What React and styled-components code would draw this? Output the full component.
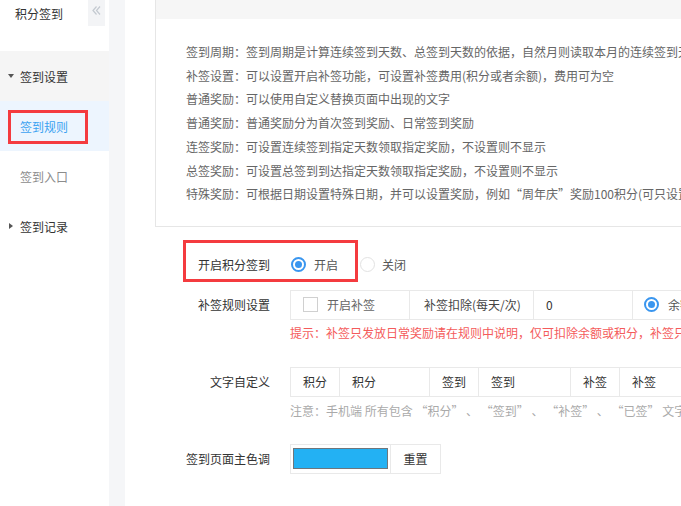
import { Fragment } from "react";
import styled, { createGlobalStyle } from "styled-components";

const GlobalStyle = createGlobalStyle`
  html, body {
    margin: 0;
    padding: 0;
    background: #fff;
  }
  body {
    font-family: "Noto Sans CJK SC", "Noto Sans", sans-serif;
    font-size: 12px;
    color: #333;
  }
`;

const Page = styled.div`
  display: flex;
  width: 681px;
  height: 506px;
  overflow: hidden;
`;

const Sidebar = styled.aside`
  width: 109px;
  flex-shrink: 0;
  background: #fff;
`;

const SideHead = styled.div`
  display: flex;
  justify-content: space-between;
  align-items: center;
  height: 26px;
  margin-bottom: 25px;
  padding-left: 15px;
`;

const SideTitle = styled.span`
  color: #333;
`;

const Collapse = styled.div`
  width: 17px;
  height: 26px;
  margin-right: 4px;
  background: #f3f4f6;
  display: flex;
  justify-content: center;
  padding-top: 6px;
  box-sizing: border-box;
`;

const NavGroup = styled.div`
  display: flex;
  align-items: center;
  gap: 5px;
  height: 50px;
  padding-left: 7px;
  background: ${(p) => (p.$shade ? "#f5f5f5" : "transparent")};
  color: #333;
`;

const Caret = styled.span`
  width: 8px;
  display: flex;
  justify-content: center;
  &::before {
    content: "";
    border-style: solid;
    border-color: transparent;
    ${(p) =>
      p.$open
        ? "border-width: 4px 3px 0 3px; border-top-color: #555;"
        : "border-width: 3.5px 0 3.5px 4px; border-left-color: #555;"}
  }
`;

const NavItem = styled.div`
  position: relative;
  display: flex;
  align-items: center;
  height: 50px;
  padding-left: 20px;
  background: ${(p) => (p.$active ? "#edf5fe" : "transparent")};
  color: ${(p) => (p.$active ? "#3ba2f1" : "#8c8c8c")};
`;

// red annotation frames drawn over the screenshot
const Mark = styled.div`
  position: absolute;
  left: ${(p) => p.$left}px;
  top: ${(p) => p.$top}px;
  width: ${(p) => p.$w}px;
  height: ${(p) => p.$h}px;
  border: 3px solid #f43b3f;
  box-sizing: border-box;
  pointer-events: none;
`;

const Gutter = styled.div`
  width: 16px;
  flex-shrink: 0;
  background: #f5f6f8;
`;

const Main = styled.main`
  flex: 1;
  padding-left: 30px;
  min-width: 0;
`;

const RuleBox = styled.section`
  width: 720px;
  border-left: 1px solid #e6e6e6;
  border-bottom: 1px solid #e6e6e6;
`;

const RuleHead = styled.div`
  height: 19px;
  background: #f6f6f6;
`;

const RuleList = styled.div`
  padding: 21px 0 20px 30px;
  line-height: 23.7px;
  color: #666;
  white-space: nowrap;
`;

const Form = styled.div`
  padding-top: 23px;
`;

const Row = styled.div`
  position: relative;
  display: flex;
  gap: 20px;
  margin-top: ${(p) => p.$gap || 0}px;
`;

const Label = styled.div`
  width: 115px;
  flex-shrink: 0;
  text-align: right;
  line-height: 30px;
  color: #333;
  white-space: nowrap;
`;

const Field = styled.div`
  display: flex;
  flex-direction: column;
  min-width: 0;
`;

const RadioGroup = styled.div`
  display: flex;
  align-items: center;
  height: 30px;
  padding-left: 1px;
  white-space: nowrap;
`;

const RadioOption = styled.label`
  display: flex;
  align-items: center;
  gap: ${(p) => p.$gap || 8}px;
  margin-right: ${(p) => p.$mr || 0}px;
  color: #555;
`;

const Radio = styled.span`
  width: 15px;
  height: 15px;
  border-radius: 50%;
  box-sizing: border-box;
  border: ${(p) => (p.$on ? "2px solid #3a96ef" : "1px solid #e2e2e2")};
  display: flex;
  align-items: center;
  justify-content: center;
  background: #fff;
  &::after {
    content: "";
    width: 7px;
    height: 7px;
    border-radius: 50%;
    background: ${(p) => (p.$on ? "#3a96ef" : "transparent")};
  }
`;

const Table = styled.div`
  display: flex;
  height: 30px;
  box-sizing: border-box;
  border: 1px solid #e9e9e9;
  border-right: none;
  width: max-content;
`;

const Cell = styled.div`
  width: ${(p) => p.$w}px;
  flex-shrink: 0;
  box-sizing: border-box;
  border-right: 1px solid #e9e9e9;
  display: flex;
  align-items: center;
  justify-content: ${(p) => (p.$center ? "center" : "flex-start")};
  gap: ${(p) => p.$gap || 0}px;
  padding-left: ${(p) => (p.$center ? 0 : p.$pl || 0)}px;
  color: ${(p) => p.$color || "#333"};
  white-space: nowrap;
`;

const Checkbox = styled.span`
  width: 15px;
  height: 15px;
  box-sizing: border-box;
  border: 1px solid #d0d0d0;
  background: #fff;
`;

const Swatch = styled.span`
  width: 95px;
  height: 21px;
  box-sizing: border-box;
  border: 1px solid #6e767c;
  background: #23b1f3;
`;

const Hint = styled.div`
  line-height: 20px;
  margin-top: ${(p) => p.$gap || 3}px;
  color: ${(p) => (p.$warn ? "#f45b5b" : "#aaa")};
  white-space: nowrap;
`;

const rules = [
  "签到周期：签到周期是计算连续签到天数、总签到天数的依据，自然月则读取本月的连续签到天数",
  "补签设置：可以设置开启补签功能，可设置补签费用(积分或者余额)，费用可为空",
  "普通奖励：可以使用自定义替换页面中出现的文字",
  "普通奖励：普通奖励分为首次签到奖励、日常签到奖励",
  "连签奖励：可设置连续签到指定天数领取指定奖励，不设置则不显示",
  "总签奖励：可设置总签到到达指定天数领取指定奖励，不设置则不显示",
  "特殊奖励：可根据日期设置特殊日期，并可以设置奖励，例如“周年庆”奖励100积分(可只设置奖励)",
];

const words = ["积分", "签到", "补签"];
const wordWidths = [90, 92, 120];

const ChevronsLeft = () => (
  <svg width="9" height="9" viewBox="0 0 9 9" fill="none" stroke="#c3c9d0" strokeWidth="1.2">
    <polyline points="4.5,0.5 1,4.5 4.5,8.5" />
    <polyline points="8,0.5 4.5,4.5 8,8.5" />
  </svg>
);

export default function App() {
  return (
    <>
      <GlobalStyle />
      <Page>
        <Sidebar>
          <SideHead>
            <SideTitle>积分签到</SideTitle>
            <Collapse>
              <ChevronsLeft />
            </Collapse>
          </SideHead>
          <NavGroup $shade>
            <Caret $open />
            签到设置
          </NavGroup>
          <NavItem $active>
            签到规则
            <Mark $left={8} $top={9} $w={80} $h={34} />
          </NavItem>
          <NavItem>签到入口</NavItem>
          <NavGroup>
            <Caret />
            签到记录
          </NavGroup>
        </Sidebar>
        <Gutter />
        <Main>
          <RuleBox>
            <RuleHead />
            <RuleList>
              {rules.map((r, i) => (
                <div key={i}>{r}</div>
              ))}
            </RuleList>
          </RuleBox>
          <Form>
            <Row>
              <Label>开启积分签到</Label>
              <RadioGroup>
                <RadioOption $mr={22}>
                  <Radio $on />
                  开启
                </RadioOption>
                <RadioOption $gap={7}>
                  <Radio />
                  关闭
                </RadioOption>
              </RadioGroup>
              <Mark $left={28} $top={-10} $w={175} $h={42} />
            </Row>
            <Row $gap={10}>
              <Label>补签规则设置</Label>
              <Field>
                <Table>
                  <Cell $w={119} $pl={12} $gap={9} $color="#666">
                    <Checkbox />
                    开启补签
                  </Cell>
                  <Cell $w={124} $pl={14} $color="#444">
                    补签扣除(每天/次)
                  </Cell>
                  <Cell $w={99} $pl={12}>
                    0
                  </Cell>
                  <Cell $w={200} $pl={11} $gap={9} $color="#555">
                    <Radio $on />
                    余额
                  </Cell>
                </Table>
                <Hint $warn>
                  提示：补签只发放日常奖励请在规则中说明，仅可扣除余额或积分，补签只可补签本月
                </Hint>
              </Field>
            </Row>
            <Row $gap={24}>
              <Label>文字自定义</Label>
              <Field>
                <Table>
                  {words.map((w, i) => (
                    <Fragment key={w}>
                      <Cell $w={49} $center>
                        {w}
                      </Cell>
                      <Cell $w={wordWidths[i]} $pl={12}>
                        {w}
                      </Cell>
                    </Fragment>
                  ))}
                </Table>
                <Hint $gap={4}>
                  注意：手机端 所有包含 “积分” 、 “签到” 、 “补签” 、 “已签” 文字均可替换
                </Hint>
              </Field>
            </Row>
            <Row $gap={23}>
              <Label>签到页面主色调</Label>
              <Field>
                <Table>
                  <Cell $w={100} $pl={2}>
                    <Swatch />
                  </Cell>
                  <Cell $w={50} $center>
                    重置
                  </Cell>
                </Table>
              </Field>
            </Row>
          </Form>
        </Main>
      </Page>
    </>
  );
}
